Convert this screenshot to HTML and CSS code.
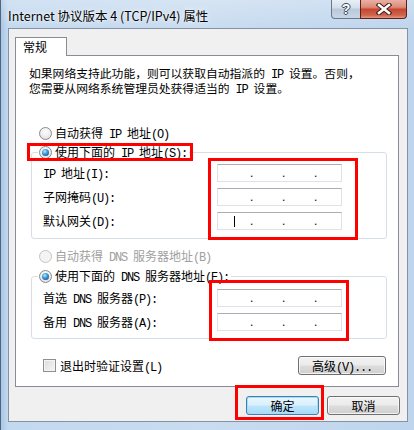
FILE: index.html
```html
<!DOCTYPE html>
<html lang="zh-CN">
<head>
<meta charset="utf-8">
<title>Internet 协议版本 4 (TCP/IPv4) 属性</title>
<link rel="stylesheet" href="styles.css">
</head>
<body>
<div class="window">
  <div class="titlebar">
    <div class="title">Internet 协议版本 4 (TCP/IPv4) 属性</div>
    <div class="caption-buttons">
      <div class="cap help"><span class="q">?</span></div>
      <div class="cap close">
        <svg width="18" height="12" viewBox="0 0 18 12">
          <path d="M4 2 L14 10 M14 2 L4 10" stroke="#3a1a14" stroke-width="4.6" stroke-linecap="square" fill="none"/>
          <path d="M4 2 L14 10 M14 2 L4 10" stroke="#ffffff" stroke-width="2.6" stroke-linecap="square" fill="none"/>
        </svg>
      </div>
    </div>
  </div>
  <div class="client">
    <div class="tabs"><div class="tab">常规</div></div>
    <div class="panel">
      <p class="desc">如果网络支持此功能，则可以获取自动指派的<span class="en"> IP </span>设置。否则，<br>您需要从网络系统管理员处获得适当的<span class="en"> IP </span>设置。</p>
      <div class="radio-row first"><span class="radio"></span><span class="txt">自动获得<span class="en"> IP </span>地址<span class="en">(O)</span></span></div>
      <fieldset class="group g1">
        <legend><span class="radio checked"></span><span class="txt">使用下面的<span class="en"> IP </span>地址<span class="en">(S):</span></span></legend>
        <div class="grid">
          <span class="lbl"><span class="en">IP </span>地址<span class="en">(I):</span></span>
          <div class="ip"><span class="dot">.</span><span class="dot">.</span><span class="dot">.</span></div>
          <span class="lbl">子网掩码<span class="en">(U):</span></span>
          <div class="ip"><span class="dot">.</span><span class="dot">.</span><span class="dot">.</span></div>
          <span class="lbl">默认网关<span class="en">(D):</span></span>
          <div class="ip"><span class="caret"></span><span class="dot">.</span><span class="dot">.</span><span class="dot">.</span></div>
        </div>
      </fieldset>
      <div class="radio-row disabled"><span class="radio"></span><span class="txt">自动获得<span class="en"> DNS </span>服务器地址<span class="en">(B)</span></span></div>
      <fieldset class="group g2">
        <legend><span class="radio checked"></span><span class="txt">使用下面的<span class="en"> DNS </span>服务器地址<span class="en">(E):</span></span></legend>
        <div class="grid">
          <span class="lbl">首选<span class="en"> DNS </span>服务器<span class="en">(P):</span></span>
          <div class="ip"><span class="dot">.</span><span class="dot">.</span><span class="dot">.</span></div>
          <span class="lbl">备用<span class="en"> DNS </span>服务器<span class="en">(A):</span></span>
          <div class="ip"><span class="dot">.</span><span class="dot">.</span><span class="dot">.</span></div>
        </div>
      </fieldset>
      <div class="bottom-row">
        <div class="check-row"><span class="checkbox"></span><span class="txt">退出时验证设置<span class="en">(L)</span></span></div>
        <div class="btn adv">高级<span class="en">(V)...</span></div>
      </div>
    </div>
    <div class="dialog-buttons">
      <div class="btn default">确定</div>
      <div class="btn">取消</div>
    </div>
  </div>
  <div class="mark m1"></div>
  <div class="mark m2"></div>
  <div class="mark m3"></div>
  <div class="mark m4"></div>
</div>
</body>
</html>
```

FILE: styles.css
```css
html, body {
  margin: 0;
  padding: 0;
}
body {
  width: 414px;
  height: 430px;
  overflow: hidden;
  font-family: "Noto Sans CJK SC", "Liberation Sans", sans-serif;
  font-size: 12px;
  color: #000;
}
.en {
  font-family: "Liberation Mono", monospace;
  font-size: 12px;
  line-height: 10px;
  letter-spacing: -1.2px;
  white-space: pre;
}
.txt {
  line-height: 16px;
  white-space: nowrap;
}
.window {
  position: relative;
  width: 414px;
  height: 430px;
  box-sizing: border-box;
  border-left: 1px solid #52657d;
  background:
    linear-gradient(180deg, rgba(255,255,255,0.25) 0%, rgba(255,255,255,0) 28px),
    linear-gradient(90deg, #a9c6e6 0px, #c3d9ef 7px, #c9dcf0 50%, #bed5ed 100%);
}
.titlebar {
  height: 28px;
  display: flex;
  justify-content: space-between;
  align-items: flex-start;
}
.title {
  padding-left: 7px;
  padding-top: 7px;
  line-height: 17px;
  font-size: 12.5px;
  text-shadow: 0 0 6px rgba(255,255,255,0.9), 0 0 2px rgba(255,255,255,0.9);
}
.caption-buttons {
  display: flex;
  margin-right: 7px;
}
.cap {
  height: 19px;
  box-sizing: border-box;
  display: flex;
  align-items: center;
  justify-content: center;
}
.help {
  width: 29px;
  border: 1px solid #6c7787;
  border-top: 0;
  border-right: 0;
  border-radius: 0 0 0 4px;
  background: linear-gradient(180deg, #e8eff7 0%, #d3deea 45%, #b9c8da 50%, #c8d6e6 100%);
}
.help .q {
  font-family: "Liberation Sans", sans-serif;
  font-weight: bold;
  font-size: 14px;
  line-height: 17px;
  color: #fff;
  text-shadow: 1px 0 0 #3b4656, -1px 0 0 #3b4656, 0 1px 0 #3b4656, 0 -1px 0 #3b4656;
}
.close {
  width: 47px;
  border: 1px solid #5c2219;
  border-top: 0;
  border-radius: 0 0 4px 0;
  background: linear-gradient(180deg, #eab0a3 0%, #dc8b78 40%, #c7472f 52%, #d0654e 85%, #e49a84 100%);
}
.client {
  margin: 0 7px;
  width: 400px;
  height: 394px;
  box-sizing: border-box;
  border: 1px solid #8592a4;
  background: #f0f0f0;
  padding: 8px 7px 0 6px;
}
.tabs {
  display: flex;
}
.tab {
  position: relative;
  z-index: 1;
  width: 52px;
  height: 19px;
  box-sizing: border-box;
  border: 1px solid #898c95;
  border-bottom: 0;
  background: #fff;
  margin-bottom: -1px;
  padding-left: 7px;
  line-height: 18px;
}
.panel {
  width: 384px;
  height: 332px;
  box-sizing: border-box;
  border: 1px solid #898c95;
  background: #fff;
  padding: 9px 11px 0 15px;
}
.desc {
  margin: 0 0 0 -2px;
  line-height: 15px;
  white-space: nowrap;
  font-size: 11.8px;
}
.radio-row {
  display: flex;
  align-items: center;
  gap: 3px;
  height: 16px;
  padding-left: 8px;
}
.radio-row.first {
  margin-top: 30px;
}
.radio-row.disabled {
  margin-top: 9px;
  color: #a0a0a0;
}
.radio {
  position: relative;
  flex: none;
  width: 13px;
  height: 13px;
  box-sizing: border-box;
  border-radius: 50%;
  border: 1px solid #8a8a8a;
  background: radial-gradient(circle at 50% 35%, #ffffff 0%, #eeeeee 50%, #d4d4d4 100%);
}
.radio.checked::after {
  content: "";
  position: absolute;
  left: 2px;
  top: 2px;
  width: 7px;
  height: 7px;
  border-radius: 50%;
  background: radial-gradient(circle at 40% 35%, #b6ecff 0%, #48a6e0 35%, #1b5f9e 75%, #15467a 100%);
}
.disabled .radio {
  border-color: #c4c4c4;
  background: #f4f4f4;
}
.group {
  margin: 0;
  border: 1px solid #d5dfe5;
  border-radius: 3px;
  padding: 4px 11px 8px 11px;
  min-inline-size: 0;
}
.g1 {
  margin-top: 3px;
}
.g2 {
  margin-top: 4px;
  padding-top: 5px;
  padding-bottom: 7px;
}
.group legend {
  display: flex;
  align-items: center;
  gap: 3px;
  height: 16px;
  margin-left: -5px;
  padding: 0 2px 0 1px;
}
.grid {
  display: grid;
  grid-template-columns: 174px 125px;
  grid-auto-rows: 18px;
  row-gap: 6px;
  align-items: center;
}
.lbl {
  line-height: 16px;
  white-space: nowrap;
}
.ip {
  position: relative;
  height: 18px;
  box-sizing: border-box;
  border: 1px solid #dde2e8;
  border-top-color: #abadb3;
  background: #fff;
  display: flex;
  align-items: center;
  padding-left: 32px;
  gap: 29px;
  font-family: "Liberation Sans", sans-serif;
  line-height: 16px;
}
.dot {
  width: 3px;
  text-align: center;
  font-size: 12px;
}
.caret {
  position: absolute;
  left: 16px;
  top: 3px;
  width: 1px;
  height: 11px;
  background: #000;
}
.bottom-row {
  margin-top: 17px;
  display: flex;
  justify-content: space-between;
  align-items: center;
}
.check-row {
  display: flex;
  align-items: center;
  gap: 4px;
  padding-left: 12px;
}
.checkbox {
  flex: none;
  width: 13px;
  height: 13px;
  box-sizing: border-box;
  border: 1px solid #8e8f8f;
  background: linear-gradient(135deg, #dcdcdc 0%, #f6f6f6 100%);
  box-shadow: inset 0 0 0 1px #f4f4f4;
}
.btn {
  width: 73px;
  height: 19px;
  box-sizing: border-box;
  border: 1px solid #707070;
  border-radius: 3px;
  background: linear-gradient(180deg, #f2f2f2 0%, #ebebeb 48%, #dddddd 52%, #cfcfcf 100%);
  box-shadow: inset 0 0 0 1px rgba(255,255,255,0.7);
  text-align: center;
  line-height: 17px;
}
.btn.adv {
  width: 88px;
  margin-right: 1px;
}
.btn.default {
  border-color: #3c7fb1;
  background: linear-gradient(180deg, #eaf6fd 0%, #d9f0fc 48%, #bee6fd 52%, #a7d9f5 100%);
  box-shadow: inset 0 0 0 1px #a8dbf6;
}
.dialog-buttons {
  margin-top: 9px;
  display: flex;
  justify-content: flex-end;
  gap: 8px;
}
.mark {
  position: absolute;
  box-sizing: border-box;
  border: 3px solid #ff0000;
  pointer-events: none;
}
.m1 { left: 26px; top: 143px; width: 166px; height: 18px; }
.m2 { left: 207px; top: 158px; width: 150px; height: 82px; }
.m3 { left: 208px; top: 280px; width: 140px; height: 61px; }
.m4 { left: 234px; top: 385px; width: 89px; height: 35px; }
```
